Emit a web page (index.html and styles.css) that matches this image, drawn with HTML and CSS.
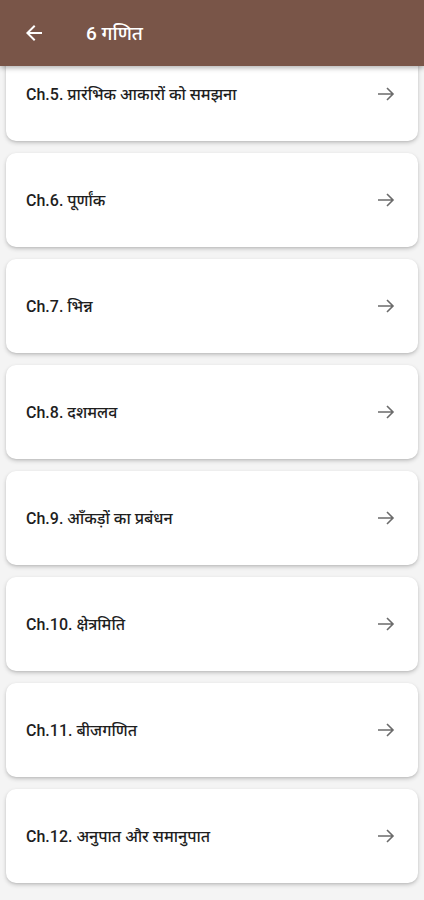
FILE: index.html
```html
<!DOCTYPE html>
<html lang="hi">
<head>
  <meta charset="UTF-8" />
  <meta name="viewport" content="width=device-width, initial-scale=1.0"/>
  <title>6 गणित</title>
  <link rel="stylesheet" href="styles.css">
</head>
<body>

<div class="app-bar">
  <button class="back-btn" aria-label="Back">
    <svg width="24" height="24" viewBox="0 0 24 24"><path d="M20 11H7.83l5.59-5.59L12 4l-8 8 8 8 1.41-1.41L7.83 13H20v-2z" fill="#fff"/></svg>
  </button>
  <div class="title">6 गणित</div>
</div>

<div class="chapter-list">
  <div class="chapter-card">
    <span class="chapter-name">Ch.5. प्रारंभिक आकारों को समझना</span>
    <svg class="arrow" width="24" height="24" viewBox="0 0 24 24"><path d="M4 12h15M13 6l6 6-6 6" fill="none" stroke="#6b6b6b" stroke-width="1.6"/></svg>
  </div>
  <div class="chapter-card">
    <span class="chapter-name">Ch.6. पूर्णांक</span>
    <svg class="arrow" width="24" height="24" viewBox="0 0 24 24"><path d="M4 12h15M13 6l6 6-6 6" fill="none" stroke="#6b6b6b" stroke-width="1.6"/></svg>
  </div>
  <div class="chapter-card">
    <span class="chapter-name">Ch.7. भिन्न</span>
    <svg class="arrow" width="24" height="24" viewBox="0 0 24 24"><path d="M4 12h15M13 6l6 6-6 6" fill="none" stroke="#6b6b6b" stroke-width="1.6"/></svg>
  </div>
  <div class="chapter-card">
    <span class="chapter-name">Ch.8. दशमलव</span>
    <svg class="arrow" width="24" height="24" viewBox="0 0 24 24"><path d="M4 12h15M13 6l6 6-6 6" fill="none" stroke="#6b6b6b" stroke-width="1.6"/></svg>
  </div>
  <div class="chapter-card">
    <span class="chapter-name">Ch.9. आँकड़ों का प्रबंधन</span>
    <svg class="arrow" width="24" height="24" viewBox="0 0 24 24"><path d="M4 12h15M13 6l6 6-6 6" fill="none" stroke="#6b6b6b" stroke-width="1.6"/></svg>
  </div>
  <div class="chapter-card">
    <span class="chapter-name">Ch.10. क्षेत्रमिति</span>
    <svg class="arrow" width="24" height="24" viewBox="0 0 24 24"><path d="M4 12h15M13 6l6 6-6 6" fill="none" stroke="#6b6b6b" stroke-width="1.6"/></svg>
  </div>
  <div class="chapter-card">
    <span class="chapter-name">Ch.11. बीजगणित</span>
    <svg class="arrow" width="24" height="24" viewBox="0 0 24 24"><path d="M4 12h15M13 6l6 6-6 6" fill="none" stroke="#6b6b6b" stroke-width="1.6"/></svg>
  </div>
  <div class="chapter-card">
    <span class="chapter-name">Ch.12. अनुपात और समानुपात</span>
    <svg class="arrow" width="24" height="24" viewBox="0 0 24 24"><path d="M4 12h15M13 6l6 6-6 6" fill="none" stroke="#6b6b6b" stroke-width="1.6"/></svg>
  </div>
</div>

</body>
</html>
```

FILE: styles.css
```css
body {
  margin: 0;
  background: #f4f4f4;
  font-family: Roboto, "Noto Sans", sans-serif;
  color: #1e1e1e;
  height: 900px;
  overflow: hidden;
}

.app-bar {
  position: relative;
  z-index: 2;
  height: 66px;
  display: flex;
  align-items: center;
  background: #795548;
  box-shadow: 0 2px 5px rgba(0, 0, 0, 0.3);
}

.back-btn {
  background: transparent;
  border: none;
  padding: 0;
  margin-left: 22px;
  width: 24px;
  height: 24px;
  display: flex;
}

.title {
  margin-left: 40px;
  color: #fff;
  font-size: 19px;
  font-weight: 500;
}

/* list is scrolled down a bit, first card sits under the app bar */
.chapter-list {
  margin-top: -19px;
  padding: 0 6px;
  display: flex;
  flex-direction: column;
  gap: 12px;
}

.chapter-card {
  height: 94px;
  background: #fff;
  border-radius: 10px;
  box-shadow: 0 2px 4px rgba(0, 0, 0, 0.18), 0 1px 2px rgba(0, 0, 0, 0.08);
  display: flex;
  align-items: center;
  justify-content: space-between;
  padding: 0 20px 0 20px;
}

.chapter-name {
  font-size: 16px;
  font-weight: 500;
}

.arrow {
  flex-shrink: 0;
}
```
